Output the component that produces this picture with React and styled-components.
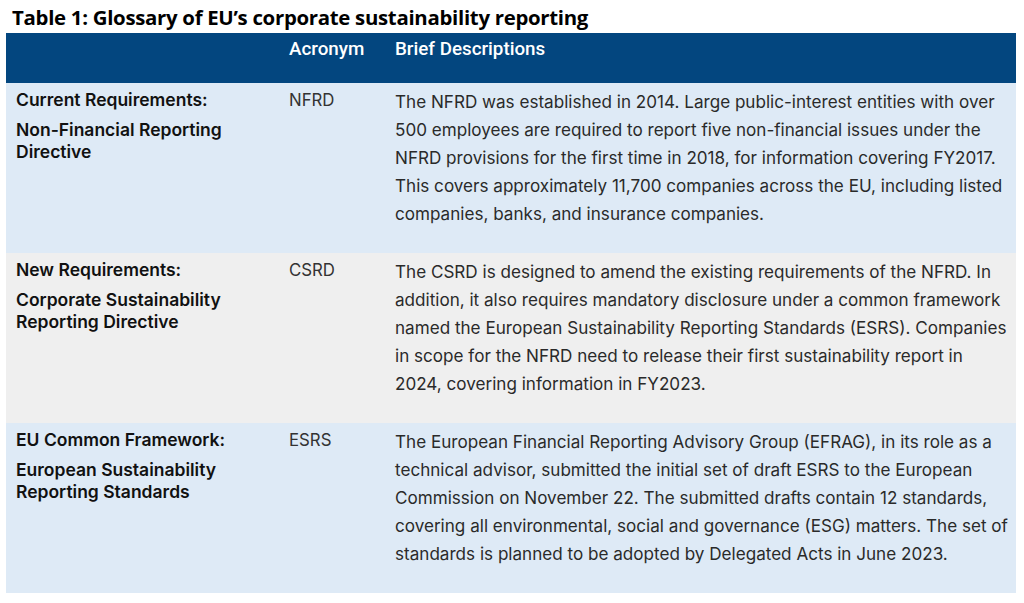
import React from "react";
import styled, { createGlobalStyle } from "styled-components";

const GlobalStyle = createGlobalStyle`
  html, body {
    margin: 0;
    padding: 0;
    background: #ffffff;
  }
`;

const rows = [
  {
    label: "Current Requirements:",
    name: ["Non-Financial Reporting", "Directive"],
    acronym: "NFRD",
    tone: "blue",
    lines: [
      "The NFRD was established in 2014. Large public-interest entities with over",
      "500 employees are required to report five non-financial issues under the",
      "NFRD provisions for the first time in 2018, for information covering FY2017.",
      "This covers approximately 11,700 companies across the EU, including listed",
      "companies, banks, and insurance companies.",
    ],
  },
  {
    label: "New Requirements:",
    name: ["Corporate Sustainability", "Reporting Directive"],
    acronym: "CSRD",
    tone: "gray",
    lines: [
      "The CSRD is designed to amend the existing requirements of the NFRD. In",
      "addition, it also requires mandatory disclosure under a common framework",
      "named the European Sustainability Reporting Standards (ESRS). Companies",
      "in scope for the NFRD need to release their first sustainability report in",
      "2024, covering information in FY2023.",
    ],
  },
  {
    label: "EU Common Framework:",
    name: ["European Sustainability", "Reporting Standards"],
    acronym: "ESRS",
    tone: "blue",
    lines: [
      "The European Financial Reporting Advisory Group (EFRAG), in its role as a",
      "technical advisor, submitted the initial set of draft ESRS to the European",
      "Commission on November 22. The submitted drafts contain 12 standards,",
      "covering all environmental, social and governance (ESG) matters. The set of",
      "standards is planned to be adopted by Delegated Acts in June 2023.",
    ],
  },
];

const App = () => (
  <>
    <GlobalStyle />
    <Page>
      <Title>Table 1: Glossary of EU’s corporate sustainability reporting</Title>
      <Table>
        <HeaderRow>
          <HeadCell />
          <HeadCell>Acronym</HeadCell>
          <HeadCell>Brief Descriptions</HeadCell>
        </HeaderRow>
        {rows.map((r) => (
          <Row key={r.acronym} tone={r.tone}>
            <TermCell>
              <Label>{r.label}</Label>
              {r.name.map((n) => (
                <Line key={n}>{n}</Line>
              ))}
            </TermCell>
            <AcronymCell>{r.acronym}</AcronymCell>
            <DescCell>
              {r.lines.map((l) => (
                <Line key={l}>{l}</Line>
              ))}
            </DescCell>
          </Row>
        ))}
      </Table>
    </Page>
  </>
);

export default App;

/******************/
/***** Styles *****/
/******************/

const Page = styled.div`
  padding: 4px 8px 0 6px;
  width: 1010px;
`;

const Title = styled.h1`
  margin: 0 0 3px 6px;
  font-family: "Open Sans", "Lato", sans-serif;
  font-size: 20.4px;
  font-weight: 700;
  line-height: 26px;
  color: #000000;
  letter-spacing: -0.3px;
`;

const grid = `
  display: grid;
  grid-template-columns: 273px 106px 1fr;
`;

const HeaderRow = styled.div`
  ${grid}
  height: 50px;
  background: #03467f;
`;

const HeadCell = styled.div`
  padding: 5px 10px 0;
  font-family: "Roboto", "Liberation Sans", sans-serif;
  font-size: 18.8px;
  font-weight: 500;
  line-height: 22px;
  color: #ffffff;
`;

const Table = styled.div`
  display: flex;
  flex-direction: column;
`;

const Row = styled.div`
  ${grid}
  height: 170px;
  background: ${({ tone }) => (tone === "gray" ? "#efefef" : "#deeaf6")};
  color: #1f1f1f;
`;

const Line = styled.div`
  white-space: nowrap;
`;

const TermCell = styled.div`
  padding: 6px 10px 0;
  font-family: "Inter", "Liberation Sans", sans-serif;
  font-size: 17.5px;
  font-weight: 600;
  line-height: 22px;
  color: #111111;
`;

const Label = styled.div`
  margin-bottom: 8px;
`;

const AcronymCell = styled.div`
  padding: 6px 10px 0;
  font-family: "Inter", "Liberation Sans", sans-serif;
  font-size: 16.8px;
  font-weight: 400;
  line-height: 22px;
  color: #333333;
`;

const DescCell = styled.div`
  padding: 5px 14px 0 10px;
  font-family: "Inter", "Liberation Sans", sans-serif;
  font-size: 17.1px;
  font-weight: 400;
  line-height: 28px;
  color: #2a2a2a;
`;
